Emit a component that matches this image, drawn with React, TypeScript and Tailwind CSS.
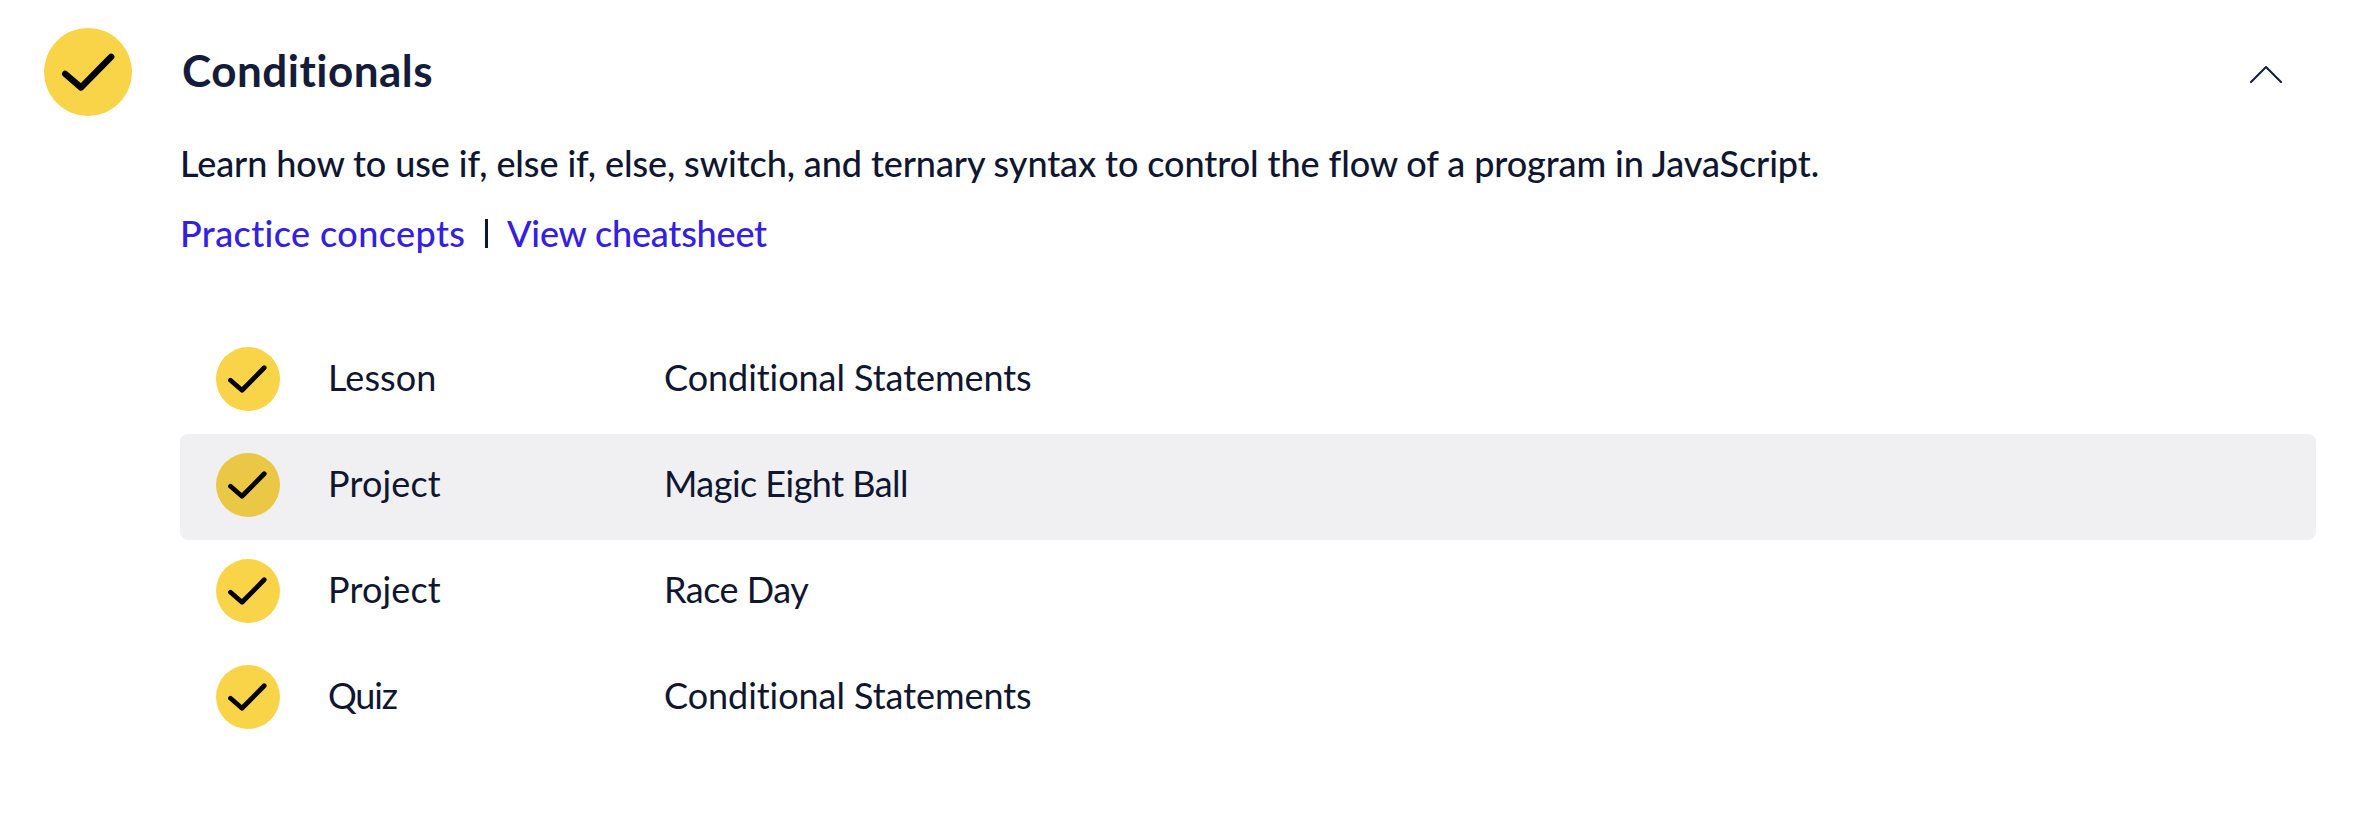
type Item = { kind: string; kindClass: string; title: string; titleClass: string; active?: boolean };

const items: Item[] = [
  { kind: "Lesson", kindClass: "tracking-[0.1px]", title: "Conditional Statements", titleClass: "tracking-[-0.05px]" },
  { kind: "Project", kindClass: "tracking-[0.15px]", title: "Magic Eight Ball", titleClass: "tracking-[-0.53px]", active: true },
  { kind: "Project", kindClass: "tracking-[0.15px]", title: "Race Day", titleClass: "tracking-[-0.5px]" },
  { kind: "Quiz", kindClass: "tracking-[-1.2px]", title: "Conditional Statements", titleClass: "tracking-[-0.05px]" },
];

function ModuleCheck() {
  return (
    <svg className="size-[88px] shrink-0" viewBox="0 0 88 88" fill="none">
      <circle cx="44" cy="44" r="44" fill="#f9d449" />
      <path d="M21.2 45.8 37 59.5 67.2 28.8" stroke="#000" strokeWidth="6.4" strokeLinecap="round" strokeLinejoin="round" />
    </svg>
  );
}

function ItemCheck({ active }: { active?: boolean }) {
  return (
    <svg className="size-16 shrink-0" viewBox="0 0 64 64" fill="none">
      <circle cx="32" cy="32" r="32" fill={active ? "#eac845" : "#f9d449"} />
      <path d="M14.5 33.3 26 43.2 48.2 20.8" stroke="#000" strokeWidth="4.8" strokeLinecap="round" strokeLinejoin="round" />
    </svg>
  );
}

export default function App() {
  return (
    <main className="h-[830px] w-full bg-white font-['Lato',sans-serif] text-4xl/[36px] text-[#10162f] [font-variant-ligatures:none]">
      <header className="flex items-center pt-7 pr-[76px] pl-11">
        <ModuleCheck />
        <h2 className="ml-[50px] pb-1 text-[44px]/[44px] font-bold tracking-[0.5px] text-[#141c3a]">Conditionals</h2>
        <svg className="mt-[3px] ml-auto h-[18px] w-8" viewBox="0 0 32 18" fill="none">
          <path d="M1 17 16 2 31 17" stroke="#141c3a" strokeWidth="2" strokeLinecap="round" strokeLinejoin="round" />
        </svg>
      </header>
      <section className="pt-[29px] pl-[180px] font-medium">
        <p className="tracking-[-0.09px] whitespace-nowrap">
          Learn how to use if, else if, else, switch, and ternary syntax to control the flow of a program in JavaScript.
        </p>
        <div className="mt-[34px] flex items-center text-[#3320e0]">
          <a className="w-[285px] tracking-[0.4px] whitespace-nowrap">Practice concepts</a>
          <span className="ml-5 h-[29px] w-[3px] bg-[#10162f]" />
          <a className="ml-[19px] tracking-[-0.2px]">View cheatsheet</a>
        </div>
      </section>
      <ul className="mt-[77px] mr-[42px] ml-[180px]">
        {items.map((item, i) => (
          <li key={i} className={`flex h-[106px] items-center rounded-lg pb-1 pl-9 ${item.active ? "bg-[#f0f0f2]" : ""}`}>
            <ItemCheck active={item.active} />
            <span className={`ml-12 w-[336px] pb-1 ${item.kindClass}`}>{item.kind}</span>
            <span className={`pb-1 ${item.titleClass}`}>{item.title}</span>
          </li>
        ))}
      </ul>
    </main>
  );
}
